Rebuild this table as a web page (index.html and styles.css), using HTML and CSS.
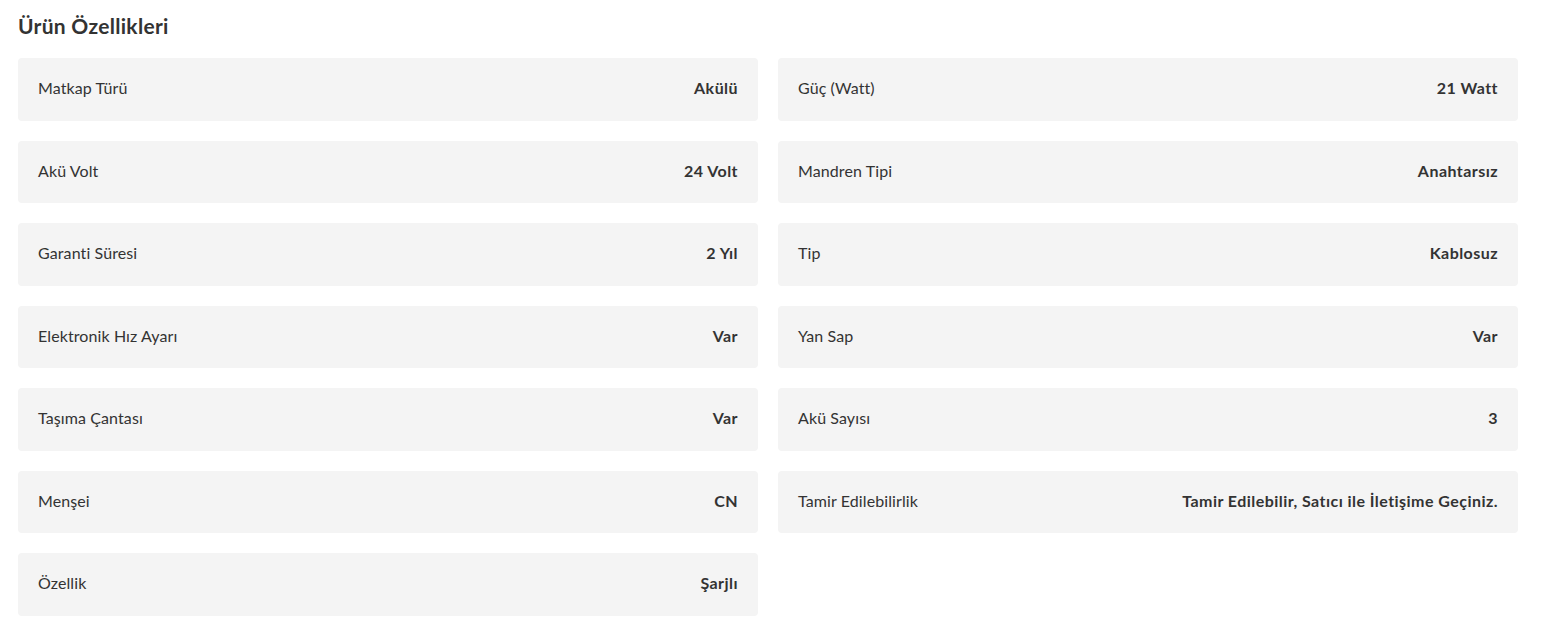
FILE: index.html
```html
<!DOCTYPE html>
<html lang="tr">
<head>
<meta charset="utf-8">
<link rel="stylesheet" href="styles.css">
</head>
<body>
<section class="specs">
  <h2 class="title">Ürün Özellikleri</h2>
  <ul class="grid">
    <li class="item"><span class="label">Matkap Türü</span><span class="value">Akülü</span></li>
    <li class="item"><span class="label">Güç (Watt)</span><span class="value">21 Watt</span></li>
    <li class="item"><span class="label">Akü Volt</span><span class="value">24 Volt</span></li>
    <li class="item"><span class="label">Mandren Tipi</span><span class="value">Anahtarsız</span></li>
    <li class="item"><span class="label">Garanti Süresi</span><span class="value">2 Yıl</span></li>
    <li class="item"><span class="label">Tip</span><span class="value">Kablosuz</span></li>
    <li class="item"><span class="label">Elektronik Hız Ayarı</span><span class="value">Var</span></li>
    <li class="item"><span class="label">Yan Sap</span><span class="value">Var</span></li>
    <li class="item"><span class="label">Taşıma Çantası</span><span class="value">Var</span></li>
    <li class="item"><span class="label">Akü Sayısı</span><span class="value">3</span></li>
    <li class="item"><span class="label">Menşei</span><span class="value">CN</span></li>
    <li class="item"><span class="label">Tamir Edilebilirlik</span><span class="value">Tamir Edilebilir, Satıcı ile İletişime Geçiniz.</span></li>
    <li class="item"><span class="label">Özellik</span><span class="value">Şarjlı</span></li>
  </ul>
</section>
</body>
</html>
```
FILE: styles.css
```css
* { box-sizing: border-box; }
html, body { margin: 0; padding: 0; background: #fff; }
body {
  font-family: Lato, "Liberation Sans", sans-serif;
  color: #333;
}
.specs {
  width: 1500px;
  margin-left: 18px;
  padding-top: 12px;
}
.title {
  margin: 0;
  font-size: 21px;
  line-height: 28px;
  font-weight: 700;
  letter-spacing: 0.3px;
  color: #333;
}
.grid {
  list-style: none;
  margin: 18px 0 0;
  padding: 0;
  display: grid;
  grid-template-columns: 1fr 1fr;
  column-gap: 20px;
  row-gap: 20px;
}
.item {
  height: 62.5px;
  display: flex;
  align-items: center;
  justify-content: space-between;
  padding: 0 20px 3px;
  background: #f4f4f4;
  border-radius: 4px;
  font-size: 16px;
}
.label { font-weight: 400; letter-spacing: 0.1px; }
.value { font-weight: 700; text-align: right; letter-spacing: 0.45px; }
```
